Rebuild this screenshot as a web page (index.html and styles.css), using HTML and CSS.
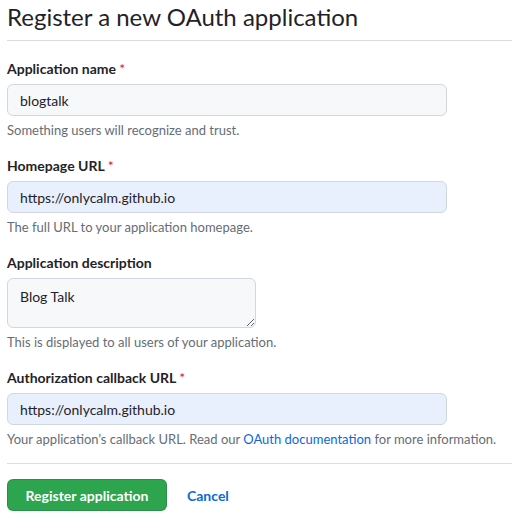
FILE: index.html
```html
<!DOCTYPE html>
<html lang="en">
<head>
<meta charset="utf-8">
<title>Register a new OAuth application</title>
<link rel="stylesheet" href="styles.css">
</head>
<body>
<div class="page">
  <h1 class="title">Register a new OAuth application</h1>
  <form class="form">
    <div class="group">
      <label class="label">Application name <span class="req">*</span></label>
      <input class="input" type="text" value="blogtalk">
      <p class="note">Something users will recognize and trust.</p>
    </div>
    <div class="group">
      <label class="label">Homepage URL <span class="req">*</span></label>
      <input class="input autofill" type="text" value="https://onlycalm.github.io">
      <p class="note">The full URL to your application homepage.</p>
    </div>
    <div class="group">
      <label class="label">Application description</label>
      <textarea class="textarea">Blog Talk</textarea>
      <p class="note">This is displayed to all users of your application.</p>
    </div>
    <div class="group group-last">
      <label class="label">Authorization callback URL <span class="req">*</span></label>
      <input class="input autofill" type="text" value="https://onlycalm.github.io">
      <p class="note">Your application’s callback URL. Read our <a class="link" href="#">OAuth documentation</a> for more information.</p>
    </div>
    <div class="actions">
      <button class="btn-primary" type="button">Register application</button>
      <a class="cancel" href="#">Cancel</a>
    </div>
  </form>
</div>
</body>
</html>
```

FILE: styles.css
```css
* { box-sizing: border-box; }
html, body { margin: 0; padding: 0; background: #ffffff; }
body {
  font-family: "Lato", "Noto Sans", sans-serif;
  color: #1f2328;
  font-size: 14px;
}
.page {
  padding: 0 0 0 7px;
}
.title {
  margin: 0;
  font-size: 24px;
  font-weight: 400;
  line-height: 34px;
  padding-bottom: 6px;
  border-bottom: 1px solid #d8dee4;
}
.form {
  padding-top: 17px;
}
.group {
  display: flex;
  flex-direction: column;
  align-items: flex-start;
  margin-bottom: 15px;
}
.group-last { margin-bottom: 14px; }
.label {
  font-weight: 700;
  font-size: 14px;
  line-height: 21px;
  margin-bottom: 5px;
}
.req { color: #cf222e; font-weight: 400; }
.input, .textarea {
  font-family: inherit;
  font-size: 14px;
  color: #1f2328;
  background: #f6f8fa;
  border: 1px solid #d0d7de;
  border-radius: 6px;
  padding: 5px 12px;
  line-height: 20px;
  outline: none;
}
.input {
  width: 440px;
  height: 32px;
}
.autofill { background: #e8f0fe; }
.textarea {
  width: 249px;
  height: 50px;
  resize: vertical;
  padding: 8px 12px;
}
.note {
  margin: 4px 0 0;
  font-size: 13px;
  line-height: 20px;
  color: #656d76;
}
.link, .cancel {
  color: #0969da;
  text-decoration: none;
}
.actions {
  border-top: 1px solid #d8dee4;
  padding-top: 15px;
  display: flex;
  align-items: center;
  gap: 20px;
}
.btn-primary {
  font-family: inherit;
  font-size: 14px;
  font-weight: 700;
  color: #ffffff;
  background: #2da44e;
  border: 1px solid rgba(27, 31, 36, 0.15);
  border-radius: 6px;
  height: 32px;
  padding: 0 16px;
  width: 160px;
  white-space: nowrap;
}
.cancel {
  font-weight: 700;
  font-size: 14px;
}
```
